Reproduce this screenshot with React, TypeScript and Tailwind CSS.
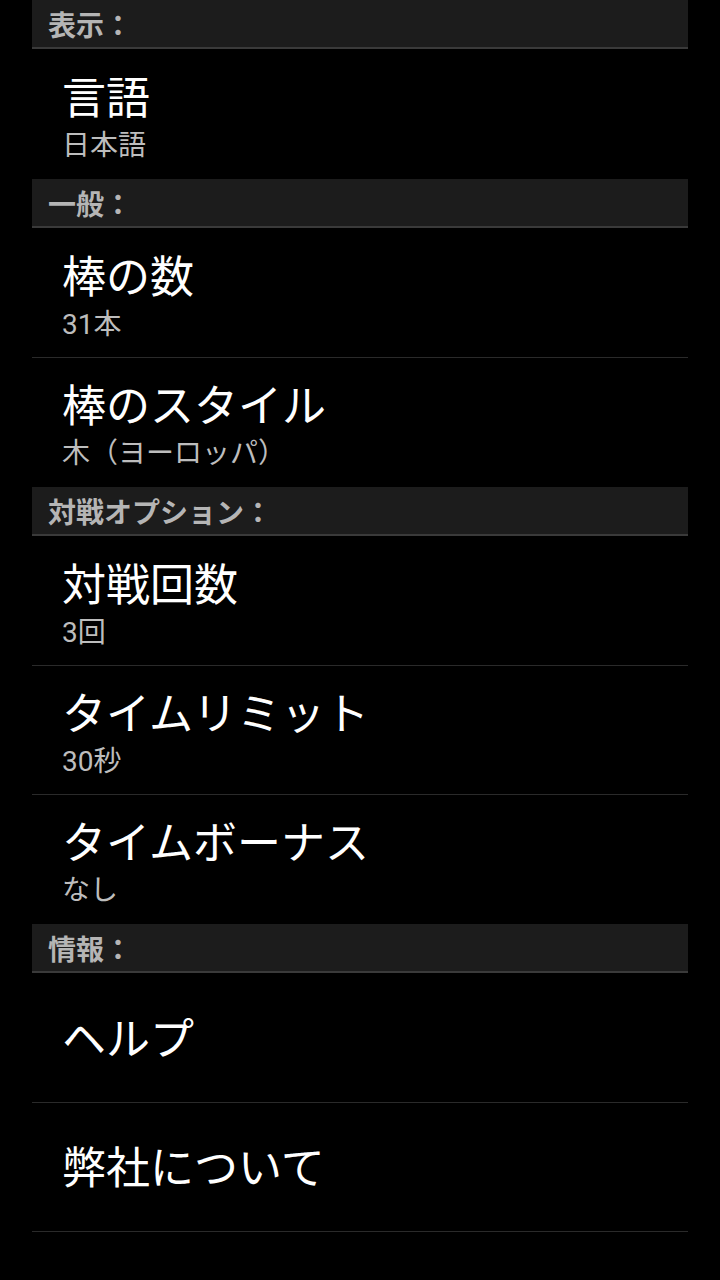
import React from "react";

interface Pref {
  title: string;
  summary?: string;
}

interface Section {
  header: string;
  items: Pref[];
}

const sections: Section[] = [
  { header: "表示：", items: [{ title: "言語", summary: "日本語" }] },
  {
    header: "一般：",
    items: [
      { title: "棒の数", summary: "31本" },
      { title: "棒のスタイル", summary: "木（ヨーロッパ）" },
    ],
  },
  {
    header: "対戦オプション：",
    items: [
      { title: "対戦回数", summary: "3回" },
      { title: "タイムリミット", summary: "30秒" },
      { title: "タイムボーナス", summary: "なし" },
    ],
  },
  {
    header: "情報：",
    items: [{ title: "ヘルプ" }, { title: "弊社について" }],
  },
];

// Roboto for the digits, Noto CJK for the Japanese
const font = { fontFamily: 'Roboto, "Noto Sans CJK JP", sans-serif' };

const PrefRow = ({ pref, divider }: { pref: Pref; divider: boolean }) => (
  <div
    className={`flex h-[129px] flex-col justify-center pl-[30px] pt-[3px] ${
      divider ? "border-b border-[#2a2a2a]" : ""
    }`}
  >
    <div className="text-[44px] leading-[60px] text-white">{pref.title}</div>
    {pref.summary && (
      <div className="text-[28px] leading-[34px] text-[#bdbdbd]">{pref.summary}</div>
    )}
  </div>
);

export default function App() {
  return (
    <div className="min-h-[1280px] w-[720px] bg-black" style={font}>
      <div className="mx-8">
        {sections.map((section, si) => (
          <div key={section.header}>
            <div className="mb-px flex h-[49px] items-center border-b-2 border-[#3a3a3a] bg-[#1c1c1c] pl-4 pt-[6px] text-[28px] font-bold text-[#b5b5b5]">
              {section.header}
            </div>
            {section.items.map((pref, i) => (
              <PrefRow
                key={pref.title}
                pref={pref}
                divider={si === sections.length - 1 || i < section.items.length - 1}
              />
            ))}
          </div>
        ))}
      </div>
    </div>
  );
}
